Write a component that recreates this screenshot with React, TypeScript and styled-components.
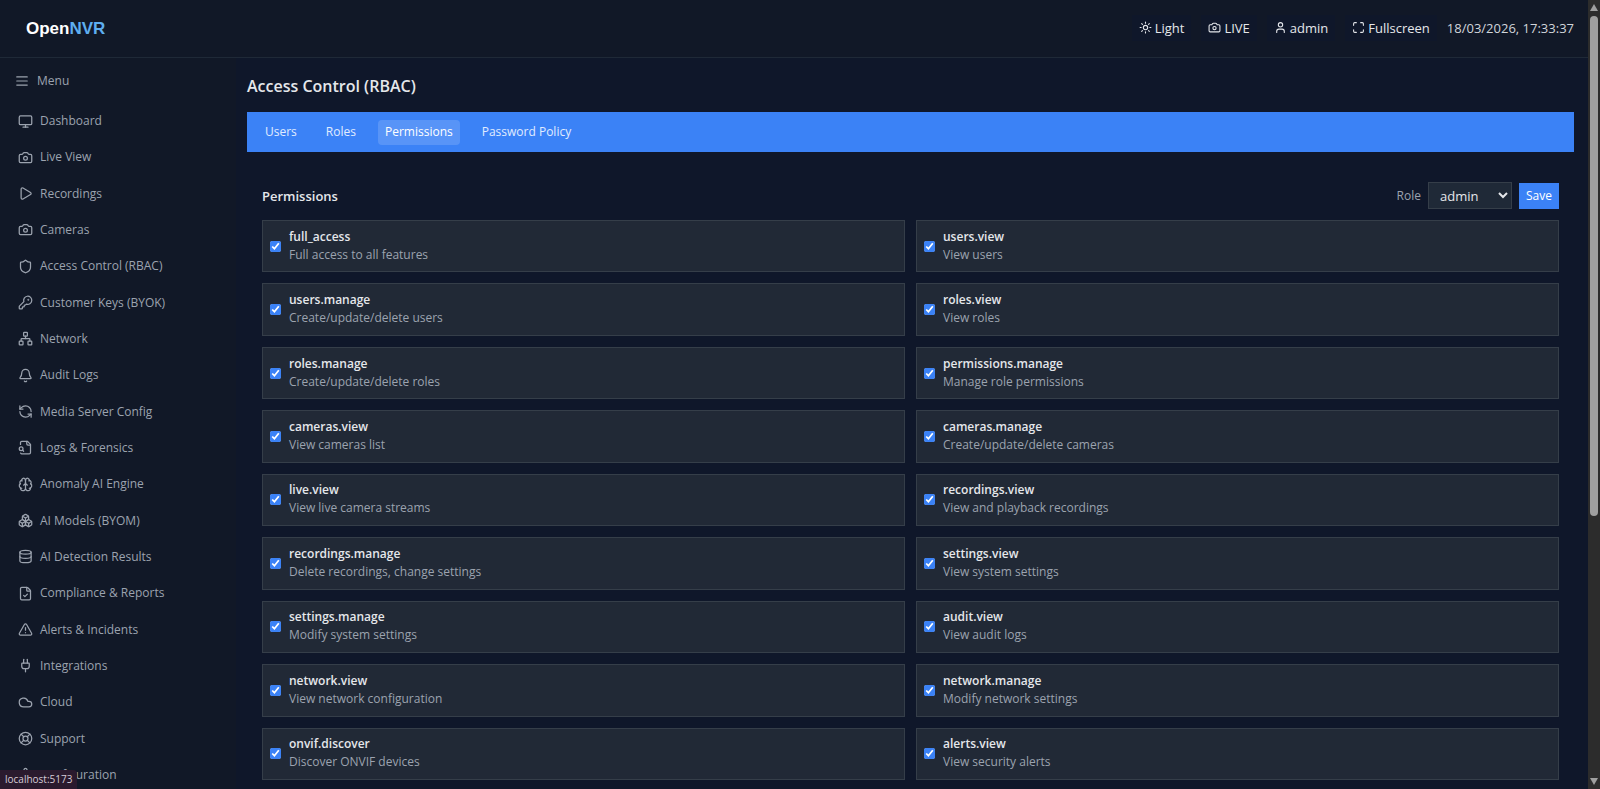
import React from "react";
import styled, { createGlobalStyle } from "styled-components";
import {
  AlignJustify, Monitor, Camera, Play, Shield, KeyRound, Network, Bell, RefreshCcw,
  Brain, Boxes, Database, FileCheck, TriangleAlert, Plug, Cloud, LifeBuoy, Settings,
  Sun, User, Maximize,
} from "lucide-react";

const colors = {
  page: "#0f172a",
  panel: "#111827",
  line: "#1f2937",
  card: "#212936",
  cardLine: "#353e49",
  accent: "#3b82f6",
  brand: "#5eaef0",
  text: "#e5e7eb",
  muted: "#9ca3af",
};

const GlobalStyle = createGlobalStyle`
  *, *::before, *::after { box-sizing: border-box; }
  body {
    margin: 0;
    background: ${colors.page};
    color: ${colors.text};
    font-family: "Open Sans", "Noto Sans", sans-serif;
    font-size: 12px;
    line-height: 18px;
  }
  h1, h2, p, ul { margin: 0; padding: 0; }
  button, select, input { font: inherit; color: inherit; }
`;

const Window = styled.div`
  display: flex;
  height: 100vh;
  overflow: hidden;
`;

const Shell = styled.div`
  flex: 1;
  min-width: 0;
  display: flex;
  flex-direction: column;
`;

const Header = styled.header`
  display: flex;
  align-items: center;
  justify-content: space-between;
  height: 58px;
  flex: none;
  padding: 0 14px 0 26px;
  background: ${colors.panel};
  border-bottom: 1px solid ${colors.line};
`;

const Logo = styled.a`
  font-family: "Liberation Sans", Arial, sans-serif;
  font-size: 17px;
  font-weight: 700;
  line-height: 24px;
  color: #ffffff;
  text-decoration: none;

  span { color: ${colors.brand}; }
`;

const HeaderActions = styled.div`
  display: flex;
  align-items: center;
  gap: 10px;
  padding-bottom: 2px;
  font-size: 13px;
`;

const HeaderButton = styled.button`
  display: flex;
  align-items: center;
  gap: 3px;
  height: 26px;
  padding: 0 7px;
  border: 0;
  background: ${colors.page};
`;

const Clock = styled.time`
  color: #d1d5db;
`;

const Body = styled.div`
  flex: 1;
  min-height: 0;
  display: flex;
`;

const Sidebar = styled.nav`
  width: 236px;
  flex: none;
  display: flex;
  flex-direction: column;
  background: ${colors.panel};
  color: ${colors.muted};
`;

const MenuToggle = styled.button`
  display: flex;
  align-items: center;
  gap: 8px;
  height: 28px;
  margin: 9px 0 12px;
  padding: 0 15px;
  border: 0;
  background: none;
`;

const NavList = styled.ul`
  flex: 1;
  display: flex;
  flex-direction: column;
  justify-content: space-between;
  list-style: none;
`;

const NavLink = styled.a`
  display: flex;
  align-items: center;
  gap: 7px;
  height: 28px;
  padding: 0 18px;
  color: inherit;
  text-decoration: none;
`;

const Main = styled.main`
  flex: 1;
  min-width: 0;
  display: flex;
  flex-direction: column;
  padding: 16px 14px 9px 11px;
  overflow: hidden;
`;

const PageTitle = styled.h1`
  font-size: 16px;
  line-height: 24px;
  font-weight: 600;
`;

const Tabs = styled.div`
  display: flex;
  align-items: center;
  gap: 15px;
  flex: none;
  height: 40px;
  margin: 14px 0 30px;
  padding: 0 11px;
  background: ${colors.accent};
`;

const Tab = styled.button<{ $active?: boolean }>`
  height: 25px;
  padding: 0 7px;
  border: 0;
  border-radius: 4px;
  background: ${(p) => (p.$active ? "rgba(255, 255, 255, 0.15)" : "transparent")};
  color: ${(p) => (p.$active ? "#ffffff" : "#e0ecff")};
`;

const Panel = styled.section`
  flex: 1;
  display: flex;
  flex-direction: column;
  padding: 0 15px;
`;

const PanelHeader = styled.div`
  display: flex;
  align-items: center;
  justify-content: space-between;
  margin-bottom: 11px;
`;

const PanelTitle = styled.h2`
  font-size: 13px;
  line-height: 18px;
  font-weight: 600;
`;

const RoleForm = styled.div`
  display: flex;
  align-items: center;
  gap: 7px;

  label { color: ${colors.muted}; }
`;

const RoleSelect = styled.select`
  width: 84px;
  height: 27px;
  padding: 0 7px;
  border: 1px solid ${colors.cardLine};
  border-radius: 0;
  background: ${colors.line};
  font-size: 13px;
`;

const SaveButton = styled.button`
  width: 40px;
  height: 26px;
  padding: 0;
  border: 0;
  background: ${colors.accent};
  color: #ffffff;
`;

const PermissionGrid = styled.div`
  flex: 1;
  display: grid;
  grid-template-columns: 1fr 1fr;
  grid-auto-rows: 1fr;
  gap: 11px;
`;

const PermissionCard = styled.label`
  display: flex;
  align-items: center;
  gap: 8px;
  padding: 0 7px;
  background: ${colors.card};
  border: 1px solid ${colors.cardLine};
`;

const Checkbox = styled.input`
  width: 11px;
  height: 11px;
  margin: 0;
  flex: none;
  accent-color: ${colors.accent};
`;

const PermissionText = styled.span`
  display: flex;
  flex-direction: column;
  padding-bottom: 1px;
`;

const PermissionName = styled.span`
  font-weight: 600;
`;

const PermissionHint = styled.span`
  color: ${colors.muted};
`;

const ScrollTrack = styled.div`
  width: 12px;
  flex: none;
  display: flex;
  flex-direction: column;
  align-items: center;
  gap: 5px;
  padding: 4px 0;
  background: #2c2c2c;
`;

const ScrollArea = styled.div`
  flex: 1;
  width: 8px;
`;

const ScrollThumb = styled.div`
  height: 66%;
  border-radius: 4px;
  background: #9f9f9f;
`;

const StatusBubble = styled.div`
  position: fixed;
  left: 0;
  bottom: 0;
  height: 19px;
  padding: 0 5px;
  border-radius: 0 4px 0 0;
  background: #2a1a2e;
  color: #d6ccd8;
  font-size: 10px;
`;

type IconType = React.ComponentType<{ size?: number }>;

const FileLens: IconType = ({ size = 24 }) => (
  <svg
    width={size}
    height={size}
    viewBox="0 0 24 24"
    fill="none"
    stroke="currentColor"
    strokeWidth="2"
    strokeLinecap="round"
    strokeLinejoin="round"
  >
    <path d="M14 2v4a2 2 0 0 0 2 2h4" />
    <path d="M4.268 21a2 2 0 0 0 1.727 1H18a2 2 0 0 0 2-2V7l-5-5H6a2 2 0 0 0-2 2v3" />
    <path d="m9 18-1.5-1.5" />
    <circle cx="5" cy="14" r="3" />
  </svg>
);

const navItems: [string, IconType][] = [
  ["Dashboard", Monitor],
  ["Live View", Camera],
  ["Recordings", Play],
  ["Cameras", Camera],
  ["Access Control (RBAC)", Shield],
  ["Customer Keys (BYOK)", KeyRound],
  ["Network", Network],
  ["Audit Logs", Bell],
  ["Media Server Config", RefreshCcw],
  ["Logs & Forensics", FileLens],
  ["Anomaly AI Engine", Brain],
  ["AI Models (BYOM)", Boxes],
  ["AI Detection Results", Database],
  ["Compliance & Reports", FileCheck],
  ["Alerts & Incidents", TriangleAlert],
  ["Integrations", Plug],
  ["Cloud", Cloud],
  ["Support", LifeBuoy],
  ["Configuration", Settings],
];

const headerItems: [string, IconType][] = [
  ["Light", Sun],
  ["LIVE", Camera],
  ["admin", User],
  ["Fullscreen", Maximize],
];

const tabs = ["Users", "Roles", "Permissions", "Password Policy"];

const permissions: [string, string][] = [
  ["full_access", "Full access to all features"],
  ["users.view", "View users"],
  ["users.manage", "Create/update/delete users"],
  ["roles.view", "View roles"],
  ["roles.manage", "Create/update/delete roles"],
  ["permissions.manage", "Manage role permissions"],
  ["cameras.view", "View cameras list"],
  ["cameras.manage", "Create/update/delete cameras"],
  ["live.view", "View live camera streams"],
  ["recordings.view", "View and playback recordings"],
  ["recordings.manage", "Delete recordings, change settings"],
  ["settings.view", "View system settings"],
  ["settings.manage", "Modify system settings"],
  ["audit.view", "View audit logs"],
  ["network.view", "View network configuration"],
  ["network.manage", "Modify network settings"],
  ["onvif.discover", "Discover ONVIF devices"],
  ["alerts.view", "View security alerts"],
];

export default function App() {
  return (
    <>
      <GlobalStyle />
      <Window>
        <Shell>
          <Header>
            <Logo href="#">Open<span>NVR</span></Logo>
            <HeaderActions>
              {headerItems.map(([label, Icon]) => (
                <HeaderButton key={label} type="button">
                  <Icon size={13} />
                  {label}
                </HeaderButton>
              ))}
              <Clock>18/03/2026, 17:33:37</Clock>
            </HeaderActions>
          </Header>
          <Body>
            <Sidebar>
              <MenuToggle type="button">
                <AlignJustify size={14} />
                Menu
              </MenuToggle>
              <NavList>
                {navItems.map(([label, Icon]) => (
                  <li key={label}>
                    <NavLink href="#">
                      <Icon size={15} />
                      {label}
                    </NavLink>
                  </li>
                ))}
              </NavList>
            </Sidebar>
            <Main>
              <PageTitle>Access Control (RBAC)</PageTitle>
              <Tabs role="tablist">
                {tabs.map((tab) => (
                  <Tab
                    key={tab}
                    type="button"
                    role="tab"
                    aria-selected={tab === "Permissions"}
                    $active={tab === "Permissions"}
                  >
                    {tab}
                  </Tab>
                ))}
              </Tabs>
              <Panel>
                <PanelHeader>
                  <PanelTitle>Permissions</PanelTitle>
                  <RoleForm>
                    <label htmlFor="role">Role</label>
                    <RoleSelect id="role" defaultValue="admin">
                      <option value="admin">admin</option>
                    </RoleSelect>
                    <SaveButton type="button">Save</SaveButton>
                  </RoleForm>
                </PanelHeader>
                <PermissionGrid>
                  {permissions.map(([name, hint]) => (
                    <PermissionCard key={name}>
                      <Checkbox type="checkbox" defaultChecked />
                      <PermissionText>
                        <PermissionName>{name}</PermissionName>
                        <PermissionHint>{hint}</PermissionHint>
                      </PermissionText>
                    </PermissionCard>
                  ))}
                </PermissionGrid>
              </Panel>
            </Main>
          </Body>
        </Shell>
        <ScrollTrack aria-hidden="true">
          <svg width="8" height="7" viewBox="0 0 8 7"><path d="M4 0L8 7H0Z" fill="#9f9f9f" /></svg>
          <ScrollArea>
            <ScrollThumb />
          </ScrollArea>
          <svg width="8" height="7" viewBox="0 0 8 7"><path d="M4 7L8 0H0Z" fill="#9f9f9f" /></svg>
        </ScrollTrack>
      </Window>
      <StatusBubble>localhost:5173</StatusBubble>
    </>
  );
}
